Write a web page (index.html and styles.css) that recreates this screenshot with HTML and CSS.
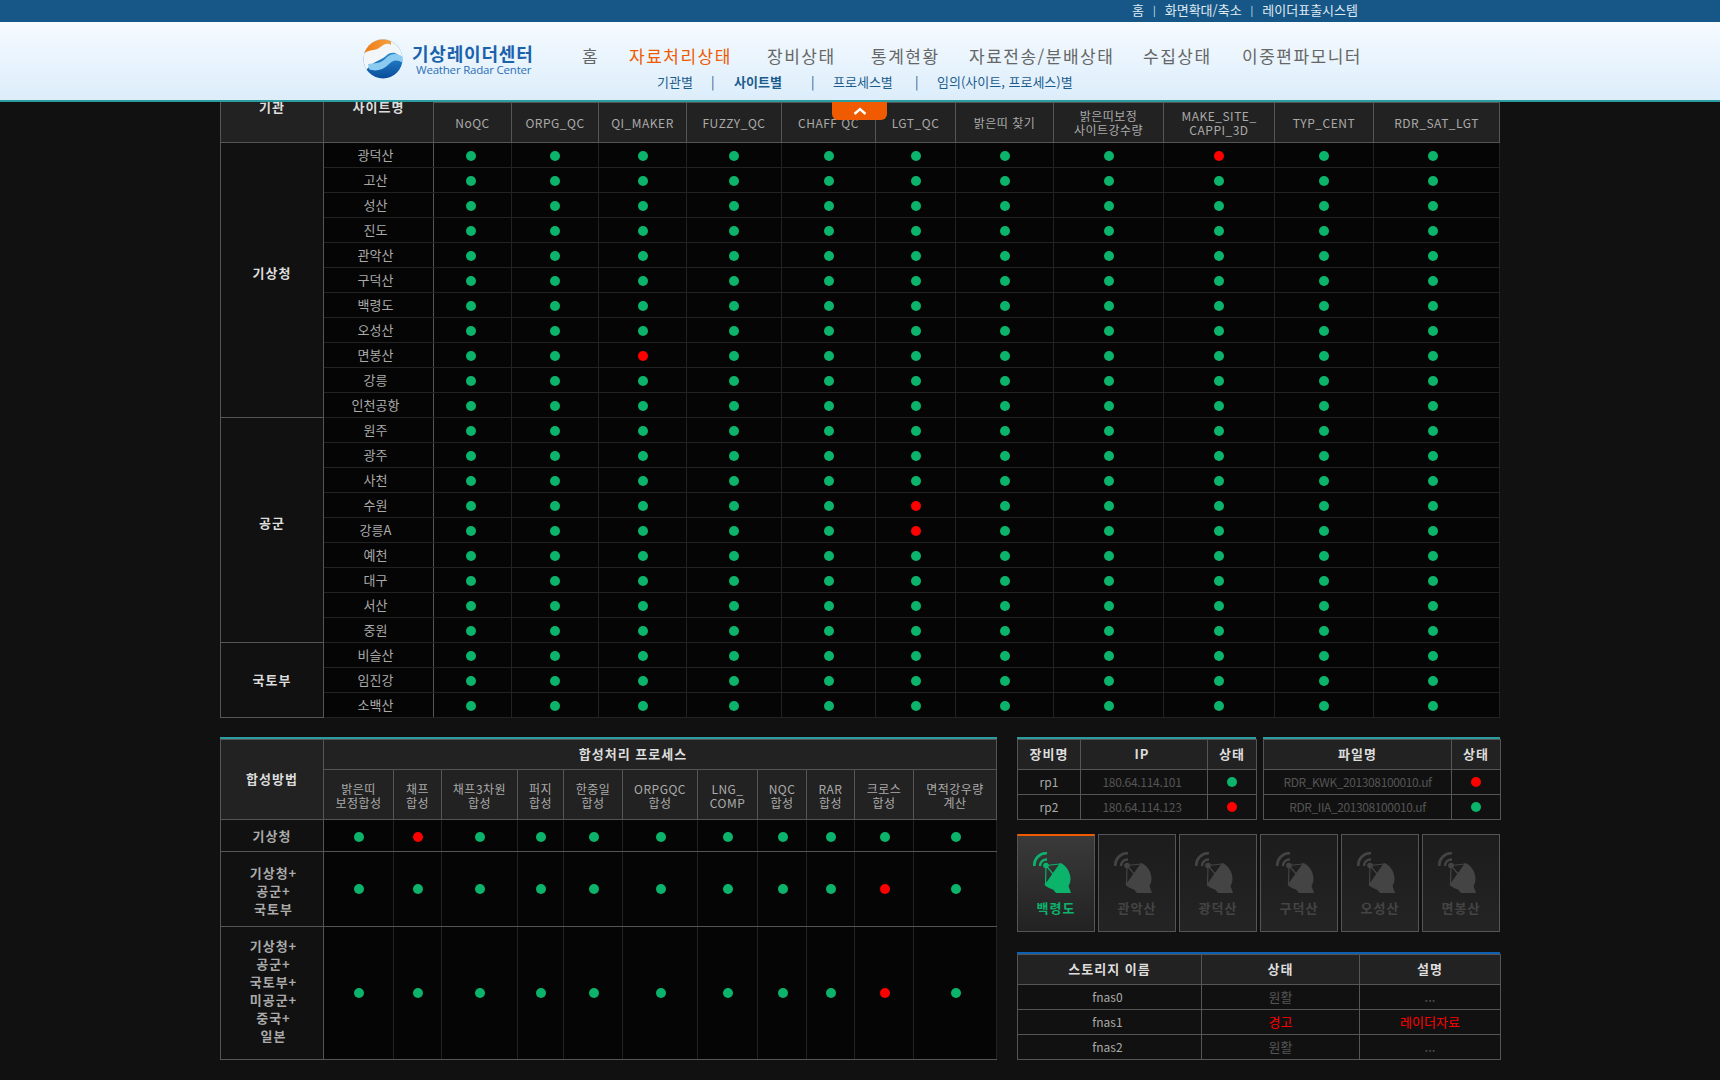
FILE: index.html
```html
<!DOCTYPE html>
<html lang="ko">
<head>
    <meta charset="UTF-8">
    <meta name="viewport" content="width=device-width, initial-scale=1.0">
    <title>기상레이더센터 - 자료처리상태</title>
    <link rel="stylesheet" href="styles.css">
</head>
<body>
    <svg class="defs" width="0" height="0">
        <defs>
            <symbol id="radar" viewBox="0 0 38 41">
                <path d="M1.300 14A12 12 0 0 1 14 1.300" fill="none" stroke="currentColor" stroke-width="2.600"/>
                <path d="M7 14A6.500 6.500 0 0 1 14 7.500" fill="none" stroke="currentColor" stroke-width="2.400"/>
                <circle cx="13" cy="13.500" r="2.800" fill="currentColor"/>
                <path d="M13 13.500L27 12M13 13.500L12.500 33M13 13.500L21 23" fill="none" stroke="currentColor" stroke-width="1.200"/>
                <path d="M27 11C33 12.500 37.500 20 37.500 27C37.500 30 36.500 32 35.500 34L38 41H23L20 37.500C17 36.500 14 35 11.500 33Z" fill="currentColor"/>
            </symbol>
        </defs>
    </svg>

    <header class="site-header">
        <div class="top-bar">
            <a>홈</a><span class="bar">|</span><a>화면확대/축소</a><span class="bar">|</span><a>레이더표출시스템</a>
        </div>
        <div class="head-main">
            <div class="logo">
                <svg class="logo-mark" width="40" height="40" viewBox="0 0 40 40">
                    <defs>
                        <clipPath id="ball"><circle cx="20" cy="20" r="19.500"/></clipPath>
                        <linearGradient id="ballBlue" x1="0" y1="0" x2="0" y2="1">
                            <stop offset="0.300" stop-color="#2a8fd8"/>
                            <stop offset="1" stop-color="#0a4a98"/>
                        </linearGradient>
                        <linearGradient id="ballOrange" x1="0" y1="0" x2="1" y2="0">
                            <stop offset="0" stop-color="#ee7a10"/>
                            <stop offset="1" stop-color="#f5a040"/>
                        </linearGradient>
                    </defs>
                    <g clip-path="url(#ball)">
                        <rect width="40" height="40" fill="url(#ballBlue)"/>
                        <path d="M0 0H40V22C35 13 29 12 24 16C19 21 11 22 6 28L0 34Z" fill="#f3f6f9"/>
                        <path d="M5 25C11 24 17 25 22 20C27 15 33 13 40 18V24C33 19 29 22 25 26C20 31 12 33 6 30Z" fill="#8ccbf0"/>
                        <path d="M0 0H28V6C24 3 20 6 16 9C12 12 6 10 0 15Z" fill="url(#ballOrange)"/>
                    </g>
                </svg>
                <div class="logo-text">
                    <strong>기상레이더센터</strong>
                    <span>Weather Radar Center</span>
                </div>
            </div>
            <nav class="nav">
                <ul class="nav-main">
                    <li>홈</li>
                    <li class="active">자료처리상태</li>
                    <li>장비상태</li>
                    <li>통계현황</li>
                    <li>자료전송/분배상태</li>
                    <li>수집상태</li>
                    <li>이중편파모니터</li>
                </ul>
                <ul class="nav-sub">
                    <li>기관별</li>
                    <li>|</li>
                    <li class="active">사이트별</li>
                    <li>|</li>
                    <li>프로세스별</li>
                    <li>|</li>
                    <li>임의(사이트, 프로세스)별</li>
                </ul>
            </nav>
        </div>
        <div class="fold-tab"><svg width="14" height="8" viewBox="0 0 14 8"><path d="M1.500 7L7 2L12.500 7" fill="none" stroke="#fff" stroke-width="2.400"/></svg></div>
    </header>

    <main class="page">
        <table class="grid site-table">
            <colgroup>
                <col style="width:103px"><col style="width:110px"><col style="width:78px"><col style="width:87px"><col style="width:88px"><col style="width:95px"><col style="width:94px"><col style="width:80px"><col style="width:98px"><col style="width:110px"><col style="width:111px"><col style="width:99px"><col style="width:126px">
            </colgroup>
            <thead>
                <tr class="hidden-row">
                    <th rowspan="2" class="strong">기관</th>
                    <th rowspan="2" class="strong">사이트명</th>
                    <th colspan="11"></th>
                </tr>
                <tr class="proc-row">
                    <th>NoQC</th><th>ORPG_QC</th><th>QI_MAKER</th><th>FUZZY_QC</th><th>CHAFF QC</th><th>LGT_QC</th><th>밝은띠 찾기</th><th>밝은띠보정<br>사이트강수량</th><th>MAKE_SITE_<br>CAPPI_3D</th><th>TYP_CENT</th><th>RDR_SAT_LGT</th>
                </tr>
            </thead>
            <tbody>
                <tr class="group-start"><th rowspan="11" class="org lift">기상청</th><td class="site">광덕산</td><td><i class="dot"></i></td><td><i class="dot"></i></td><td><i class="dot"></i></td><td><i class="dot"></i></td><td><i class="dot"></i></td><td><i class="dot"></i></td><td><i class="dot"></i></td><td><i class="dot"></i></td><td><i class="dot bad"></i></td><td><i class="dot"></i></td><td><i class="dot"></i></td></tr>
                <tr><td class="site">고산</td><td><i class="dot"></i></td><td><i class="dot"></i></td><td><i class="dot"></i></td><td><i class="dot"></i></td><td><i class="dot"></i></td><td><i class="dot"></i></td><td><i class="dot"></i></td><td><i class="dot"></i></td><td><i class="dot"></i></td><td><i class="dot"></i></td><td><i class="dot"></i></td></tr>
                <tr><td class="site">성산</td><td><i class="dot"></i></td><td><i class="dot"></i></td><td><i class="dot"></i></td><td><i class="dot"></i></td><td><i class="dot"></i></td><td><i class="dot"></i></td><td><i class="dot"></i></td><td><i class="dot"></i></td><td><i class="dot"></i></td><td><i class="dot"></i></td><td><i class="dot"></i></td></tr>
                <tr><td class="site">진도</td><td><i class="dot"></i></td><td><i class="dot"></i></td><td><i class="dot"></i></td><td><i class="dot"></i></td><td><i class="dot"></i></td><td><i class="dot"></i></td><td><i class="dot"></i></td><td><i class="dot"></i></td><td><i class="dot"></i></td><td><i class="dot"></i></td><td><i class="dot"></i></td></tr>
                <tr><td class="site">관악산</td><td><i class="dot"></i></td><td><i class="dot"></i></td><td><i class="dot"></i></td><td><i class="dot"></i></td><td><i class="dot"></i></td><td><i class="dot"></i></td><td><i class="dot"></i></td><td><i class="dot"></i></td><td><i class="dot"></i></td><td><i class="dot"></i></td><td><i class="dot"></i></td></tr>
                <tr><td class="site">구덕산</td><td><i class="dot"></i></td><td><i class="dot"></i></td><td><i class="dot"></i></td><td><i class="dot"></i></td><td><i class="dot"></i></td><td><i class="dot"></i></td><td><i class="dot"></i></td><td><i class="dot"></i></td><td><i class="dot"></i></td><td><i class="dot"></i></td><td><i class="dot"></i></td></tr>
                <tr><td class="site">백령도</td><td><i class="dot"></i></td><td><i class="dot"></i></td><td><i class="dot"></i></td><td><i class="dot"></i></td><td><i class="dot"></i></td><td><i class="dot"></i></td><td><i class="dot"></i></td><td><i class="dot"></i></td><td><i class="dot"></i></td><td><i class="dot"></i></td><td><i class="dot"></i></td></tr>
                <tr><td class="site">오성산</td><td><i class="dot"></i></td><td><i class="dot"></i></td><td><i class="dot"></i></td><td><i class="dot"></i></td><td><i class="dot"></i></td><td><i class="dot"></i></td><td><i class="dot"></i></td><td><i class="dot"></i></td><td><i class="dot"></i></td><td><i class="dot"></i></td><td><i class="dot"></i></td></tr>
                <tr><td class="site">면봉산</td><td><i class="dot"></i></td><td><i class="dot"></i></td><td><i class="dot bad"></i></td><td><i class="dot"></i></td><td><i class="dot"></i></td><td><i class="dot"></i></td><td><i class="dot"></i></td><td><i class="dot"></i></td><td><i class="dot"></i></td><td><i class="dot"></i></td><td><i class="dot"></i></td></tr>
                <tr><td class="site">강릉</td><td><i class="dot"></i></td><td><i class="dot"></i></td><td><i class="dot"></i></td><td><i class="dot"></i></td><td><i class="dot"></i></td><td><i class="dot"></i></td><td><i class="dot"></i></td><td><i class="dot"></i></td><td><i class="dot"></i></td><td><i class="dot"></i></td><td><i class="dot"></i></td></tr>
                <tr><td class="site">인천공항</td><td><i class="dot"></i></td><td><i class="dot"></i></td><td><i class="dot"></i></td><td><i class="dot"></i></td><td><i class="dot"></i></td><td><i class="dot"></i></td><td><i class="dot"></i></td><td><i class="dot"></i></td><td><i class="dot"></i></td><td><i class="dot"></i></td><td><i class="dot"></i></td></tr>
                <tr class="group-start"><th rowspan="9" class="org lift">공군</th><td class="site">원주</td><td><i class="dot"></i></td><td><i class="dot"></i></td><td><i class="dot"></i></td><td><i class="dot"></i></td><td><i class="dot"></i></td><td><i class="dot"></i></td><td><i class="dot"></i></td><td><i class="dot"></i></td><td><i class="dot"></i></td><td><i class="dot"></i></td><td><i class="dot"></i></td></tr>
                <tr><td class="site">광주</td><td><i class="dot"></i></td><td><i class="dot"></i></td><td><i class="dot"></i></td><td><i class="dot"></i></td><td><i class="dot"></i></td><td><i class="dot"></i></td><td><i class="dot"></i></td><td><i class="dot"></i></td><td><i class="dot"></i></td><td><i class="dot"></i></td><td><i class="dot"></i></td></tr>
                <tr><td class="site">사천</td><td><i class="dot"></i></td><td><i class="dot"></i></td><td><i class="dot"></i></td><td><i class="dot"></i></td><td><i class="dot"></i></td><td><i class="dot"></i></td><td><i class="dot"></i></td><td><i class="dot"></i></td><td><i class="dot"></i></td><td><i class="dot"></i></td><td><i class="dot"></i></td></tr>
                <tr><td class="site">수원</td><td><i class="dot"></i></td><td><i class="dot"></i></td><td><i class="dot"></i></td><td><i class="dot"></i></td><td><i class="dot"></i></td><td><i class="dot bad"></i></td><td><i class="dot"></i></td><td><i class="dot"></i></td><td><i class="dot"></i></td><td><i class="dot"></i></td><td><i class="dot"></i></td></tr>
                <tr><td class="site">강릉A</td><td><i class="dot"></i></td><td><i class="dot"></i></td><td><i class="dot"></i></td><td><i class="dot"></i></td><td><i class="dot"></i></td><td><i class="dot bad"></i></td><td><i class="dot"></i></td><td><i class="dot"></i></td><td><i class="dot"></i></td><td><i class="dot"></i></td><td><i class="dot"></i></td></tr>
                <tr><td class="site">예천</td><td><i class="dot"></i></td><td><i class="dot"></i></td><td><i class="dot"></i></td><td><i class="dot"></i></td><td><i class="dot"></i></td><td><i class="dot"></i></td><td><i class="dot"></i></td><td><i class="dot"></i></td><td><i class="dot"></i></td><td><i class="dot"></i></td><td><i class="dot"></i></td></tr>
                <tr><td class="site">대구</td><td><i class="dot"></i></td><td><i class="dot"></i></td><td><i class="dot"></i></td><td><i class="dot"></i></td><td><i class="dot"></i></td><td><i class="dot"></i></td><td><i class="dot"></i></td><td><i class="dot"></i></td><td><i class="dot"></i></td><td><i class="dot"></i></td><td><i class="dot"></i></td></tr>
                <tr><td class="site">서산</td><td><i class="dot"></i></td><td><i class="dot"></i></td><td><i class="dot"></i></td><td><i class="dot"></i></td><td><i class="dot"></i></td><td><i class="dot"></i></td><td><i class="dot"></i></td><td><i class="dot"></i></td><td><i class="dot"></i></td><td><i class="dot"></i></td><td><i class="dot"></i></td></tr>
                <tr><td class="site">중원</td><td><i class="dot"></i></td><td><i class="dot"></i></td><td><i class="dot"></i></td><td><i class="dot"></i></td><td><i class="dot"></i></td><td><i class="dot"></i></td><td><i class="dot"></i></td><td><i class="dot"></i></td><td><i class="dot"></i></td><td><i class="dot"></i></td><td><i class="dot"></i></td></tr>
                <tr class="group-start"><th rowspan="3" class="org">국토부</th><td class="site">비슬산</td><td><i class="dot"></i></td><td><i class="dot"></i></td><td><i class="dot"></i></td><td><i class="dot"></i></td><td><i class="dot"></i></td><td><i class="dot"></i></td><td><i class="dot"></i></td><td><i class="dot"></i></td><td><i class="dot"></i></td><td><i class="dot"></i></td><td><i class="dot"></i></td></tr>
                <tr><td class="site">임진강</td><td><i class="dot"></i></td><td><i class="dot"></i></td><td><i class="dot"></i></td><td><i class="dot"></i></td><td><i class="dot"></i></td><td><i class="dot"></i></td><td><i class="dot"></i></td><td><i class="dot"></i></td><td><i class="dot"></i></td><td><i class="dot"></i></td><td><i class="dot"></i></td></tr>
                <tr><td class="site">소백산</td><td><i class="dot"></i></td><td><i class="dot"></i></td><td><i class="dot"></i></td><td><i class="dot"></i></td><td><i class="dot"></i></td><td><i class="dot"></i></td><td><i class="dot"></i></td><td><i class="dot"></i></td><td><i class="dot"></i></td><td><i class="dot"></i></td><td><i class="dot"></i></td></tr>
            </tbody>
        </table>

        <section class="lower">
            <div class="teal-top merge-box">
                <table class="grid merge-table">
                    <colgroup>
                        <col style="width:103px"><col style="width:70px"><col style="width:48px"><col style="width:76px"><col style="width:46px"><col style="width:59px"><col style="width:75px"><col style="width:60px"><col style="width:49px"><col style="width:48px"><col style="width:59px"><col style="width:83px">
                    </colgroup>
                    <thead>
                        <tr class="h30">
                            <th rowspan="2" class="strong">합성방법</th>
                            <th colspan="11" class="strong merge-title">합성처리 프로세스</th>
                        </tr>
                        <tr class="h50">
                            <th>밝은띠<br>보정합성</th><th>채프<br>합성</th><th>채프3차원<br>합성</th><th>퍼지<br>합성</th><th>한중일<br>합성</th><th>ORPGQC<br>합성</th><th>LNG_<br>COMP</th><th>NQC<br>합성</th><th>RAR<br>합성</th><th>크로스<br>합성</th><th>면적강우량<br>계산</th>
                        </tr>
                    </thead>
                    <tbody>
                        <tr class="h32 group-start"><th class="org dim">기상청</th><td><i class="dot"></i></td><td><i class="dot bad"></i></td><td><i class="dot"></i></td><td><i class="dot"></i></td><td><i class="dot"></i></td><td><i class="dot"></i></td><td><i class="dot"></i></td><td><i class="dot"></i></td><td><i class="dot"></i></td><td><i class="dot"></i></td><td><i class="dot"></i></td></tr>
                        <tr class="h75 group-start"><th class="org dim push">기상청+<br>공군+<br>국토부</th><td><i class="dot"></i></td><td><i class="dot"></i></td><td><i class="dot"></i></td><td><i class="dot"></i></td><td><i class="dot"></i></td><td><i class="dot"></i></td><td><i class="dot"></i></td><td><i class="dot"></i></td><td><i class="dot"></i></td><td><i class="dot bad"></i></td><td><i class="dot"></i></td></tr>
                        <tr class="h133 group-start"><th class="org dim pull">기상청+<br>공군+<br>국토부+<br>미공군+<br>중국+<br>일본</th><td><i class="dot"></i></td><td><i class="dot"></i></td><td><i class="dot"></i></td><td><i class="dot"></i></td><td><i class="dot"></i></td><td><i class="dot"></i></td><td><i class="dot"></i></td><td><i class="dot"></i></td><td><i class="dot"></i></td><td><i class="dot bad"></i></td><td><i class="dot"></i></td></tr>
                    </tbody>
                </table>
            </div>

            <div class="side">
                <div class="side-tables">
                    <div class="teal-top equip-box">
                        <table class="grid info">
                            <colgroup><col style="width:63px"><col style="width:127px"><col style="width:49px"></colgroup>
                            <thead><tr class="h30"><th class="strong">장비명</th><th class="strong ip-col">IP</th><th class="strong">상태</th></tr></thead>
                            <tbody>
                                <tr><td class="name">rp1</td><td class="muted ip-col">180.64.114.101</td><td><i class="dot"></i></td></tr>
                                <tr><td class="name">rp2</td><td class="muted ip-col">180.64.114.123</td><td><i class="dot bad"></i></td></tr>
                            </tbody>
                        </table>
                    </div>
                    <div class="teal-top file-box">
                        <table class="grid info">
                            <colgroup><col style="width:188px"><col style="width:49px"></colgroup>
                            <thead><tr class="h30"><th class="strong">파일명</th><th class="strong">상태</th></tr></thead>
                            <tbody>
                                <tr><td class="muted file">RDR_KWK_201308100010.uf</td><td><i class="dot bad"></i></td></tr>
                                <tr><td class="muted file">RDR_IIA_201308100010.uf</td><td><i class="dot"></i></td></tr>
                            </tbody>
                        </table>
                    </div>
                </div>

                <div class="radar-cards">
                    <div class="radar-card active"><svg width="38" height="41"><use href="#radar"/></svg><span>백령도</span></div>
                    <div class="radar-card"><svg width="38" height="41"><use href="#radar"/></svg><span>관악산</span></div>
                    <div class="radar-card"><svg width="38" height="41"><use href="#radar"/></svg><span>광덕산</span></div>
                    <div class="radar-card"><svg width="38" height="41"><use href="#radar"/></svg><span>구덕산</span></div>
                    <div class="radar-card"><svg width="38" height="41"><use href="#radar"/></svg><span>오성산</span></div>
                    <div class="radar-card"><svg width="38" height="41"><use href="#radar"/></svg><span>면봉산</span></div>
                </div>

                <div class="blue-top">
                    <table class="grid info storage">
                        <colgroup><col style="width:184px"><col style="width:158px"><col style="width:141px"></colgroup>
                        <thead><tr class="h30"><th class="strong">스토리지 이름</th><th class="strong">상태</th><th class="strong">설명</th></tr></thead>
                        <tbody>
                            <tr><td class="name">fnas0</td><td class="muted">원활</td><td class="muted">...</td></tr>
                            <tr><td class="name">fnas1</td><td class="alert">경고</td><td class="alert">레이더자료</td></tr>
                            <tr><td class="name">fnas2</td><td class="muted">원활</td><td class="muted">...</td></tr>
                        </tbody>
                    </table>
                </div>
            </div>
        </section>
    </main>
</body>
</html>
```

FILE: styles.css
```css
* {
    box-sizing: border-box;
}

html, body {
    margin: 0;
    padding: 0;
}

body {
    background-color: #111;
    color: #aaa;
    font-family: "Noto Sans CJK KR", "Liberation Sans", sans-serif;
    font-size: 12px;
    overflow: hidden;
}

.defs {
    display: block;
    height: 0;
}

ul {
    list-style: none;
    margin: 0;
    padding: 0;
}

.site-header {
    position: fixed;
    top: 0;
    left: 0;
    right: 0;
    z-index: 10;
}

.top-bar {
    height: 22px;
    background-color: #175787;
    color: #dfe9f2;
    display: flex;
    justify-content: flex-end;
    align-items: center;
    padding: 0 362px 2px 0;
    font-size: 13px;
    line-height: 20px;
}

.top-bar .bar {
    margin: 0 9px;
    font-size: 10px;
}

.head-main {
    height: 80px;
    background: linear-gradient(#f6fbff, #dcedfb);
    border-bottom: 2px solid #2d9c9f;
    display: flex;
    padding-left: 363px;
}

.logo {
    width: 219px;
    display: flex;
    align-items: flex-start;
    padding-top: 17px;
}

.logo-mark {
    flex: none;
}

.logo-text {
    display: flex;
    flex-direction: column;
    margin-left: 9px;
}

.logo-text strong {
    color: #1a62ac;
    font-size: 18px;
    line-height: 18px;
    letter-spacing: 0.8px;
    margin-top: 5px;
    white-space: nowrap;
}

.logo-text span {
    color: #2a6fb6;
    font-family: "Open Sans", sans-serif;
    font-size: 11.5px;
    line-height: 16px;
    margin-left: 4px;
    letter-spacing: -0.2px;
    white-space: nowrap;
}

.nav-main {
    display: grid;
    grid-template-columns: 47px 138px 104px 98px 174px 99px 120px;
    padding-top: 21px;
    color: #666;
    font-size: 17px;
    line-height: 26px;
    white-space: nowrap;
    letter-spacing: 1.5px;
}

.nav-main .active {
    color: #f05a00;
}

.nav-sub {
    display: grid;
    grid-template-columns: 54px 23px 77px 22px 82px 22px auto;
    margin-left: 75px;
    color: #1c5c8c;
    font-size: 13px;
    line-height: 18px;
    margin-top: 4px;
    white-space: nowrap;
}

.nav-sub .active {
    font-weight: bold;
}

.fold-tab {
    position: absolute;
    top: 102px;
    left: 832px;
    width: 55px;
    height: 18px;
    background-color: #f05a00;
    border-radius: 0 0 6px 6px;
    display: flex;
    align-items: center;
    justify-content: center;
}

/* page starts under the header, the table's first row is covered */
.page {
    width: 1280px;
    margin: 0 auto;
    padding: 70px 0 20px;
}

.grid {
    width: 100%;
    table-layout: fixed;
    border-collapse: collapse;
    background-color: #050505;
}

.grid th,
.grid td {
    padding: 0;
    text-align: center;
    vertical-align: middle;
    border: 1px solid #222;
    font-weight: normal;
    line-height: 14px;
}

.grid thead th {
    background-color: #222;
    color: #aaa;
    border: 1px solid #555;
    letter-spacing: 0.5px;
}

.grid thead th.strong {
    color: #ddd;
    font-weight: bold;
    font-size: 13px;
    letter-spacing: 1px;
}

.site-table {
    width: 1280px;
}

.hidden-row {
    height: 32px;
}

.proc-row {
    height: 40px;
}

.site-table tbody tr {
    height: 25px;
}

.site-table tbody td {
    padding-top: 2px;
}

/* dots of the first and last process column sit left of centre */
.site-table tbody td:nth-last-child(11) {
    padding-right: 4px;
}

.site-table tbody td:nth-last-child(1) {
    padding-right: 8px;
}

.site-table th,
.site-table td {
    border-left-color: #222;
    border-right-color: #222;
}

.site-table tbody .site {
    background-color: #050505;
    border-left: 1px solid #555;
    border-right: 1px solid #555;
    font-size: 13px;
    padding: 0 6px 0 0;
}

.grid .org {
    background-color: #111;
    color: #ddd;
    font-weight: bold;
    font-size: 13px;
    letter-spacing: 1px;
    border: 1px solid #555;
}

.grid .org.lift {
    padding-bottom: 14px;
}

.grid .org.dim {
    color: #aaa;
    line-height: 18px;
}

.grid .org.push {
    padding: 4px 0 0 3px;
}

.grid .org.pull {
    padding: 0 0 4px 3px;
}

.group-start td,
.group-start th {
    border-top: 1px solid #555;
}

.dot {
    display: block;
    width: 10px;
    height: 10px;
    margin: 0 auto;
    border-radius: 50%;
    background-color: #0bb36b;
}

.dot.bad {
    background-color: #f00;
}

.lower {
    display: flex;
    justify-content: space-between;
    margin-top: 19px;
}

.teal-top {
    border-top: 2px solid #2d9c9f;
}

.blue-top {
    border-top: 2px solid #0f60b0;
}

.merge-box {
    width: 777px;
}

.merge-table thead th {
    font-size: 12px;
}

.grid thead .h30 th {
    padding-bottom: 2px;
}

.grid thead .h50 th {
    padding-top: 2px;
}

.grid thead .merge-title {
    padding-right: 54px;
}

.h30 {
    height: 30px;
}

.h32 {
    height: 32px;
}

.h50 {
    height: 50px;
}

.h75 {
    height: 75px;
}

.h133 {
    height: 133px;
}

.merge-table td {
    border-bottom-color: #555;
    padding-left: 1px;
}

.merge-table .h32 td {
    padding-top: 2px;
}

.side {
    width: 483px;
    display: flex;
    flex-direction: column;
}

.side-tables {
    display: flex;
    justify-content: space-between;
}

.equip-box {
    width: 239px;
}

.file-box {
    width: 237px;
}

.info {
    background-color: #111;
}

.info tbody tr {
    height: 25px;
}

.grid.info td {
    border: 1px solid #555;
}

.info .name {
    color: #aaa;
}

.info .muted {
    color: #555;
    letter-spacing: -0.3px;
}

.info .muted.file {
    letter-spacing: -0.4px;
}

.grid .ip-col {
    padding-right: 4px;
}

.storage td {
    font-size: 13px;
}

.storage .name {
    padding-right: 4px;
    font-size: 12px;
}

.info.storage .muted {
    letter-spacing: 0;
}

.info .alert {
    color: #f00;
}

.radar-cards {
    display: flex;
    gap: 3px;
    margin-top: 14px;
}

.radar-card {
    width: 78px;
    height: 98px;
    border: 1px solid #555;
    background: linear-gradient(#1c1c1c, #242424);
    color: #444;
    display: flex;
    flex-direction: column;
    align-items: center;
    padding-top: 17px;
}

.radar-card svg {
    margin-right: 9px;
}

.radar-card span {
    font-size: 13px;
    font-weight: bold;
    line-height: 18px;
    letter-spacing: 1px;
    margin-top: 6px;
}

.radar-card.active {
    border-top: 2px solid #f05a00;
    background: linear-gradient(#3a3a3a, #222);
    color: #0bb36b;
    padding-top: 16px;
}

.side .blue-top {
    margin-top: 20px;
}
```
